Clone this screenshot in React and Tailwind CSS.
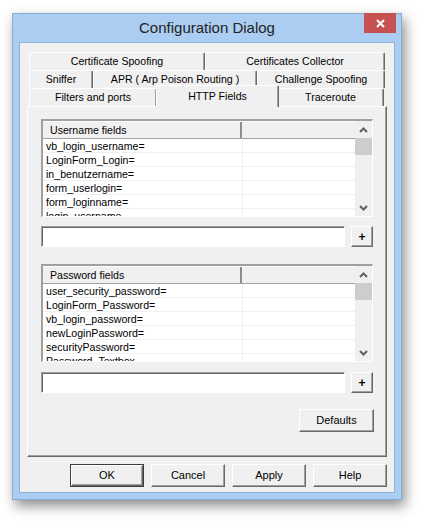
import React from "react";

const userRows = [
  "vb_login_username=",
  "LoginForm_Login=",
  "in_benutzername=",
  "form_userlogin=",
  "form_loginname=",
  "login_username",
];

const passRows = [
  "user_security_password=",
  "LoginForm_Password=",
  "vb_login_password=",
  "newLoginPassword=",
  "securityPassword=",
  "Password_Textbox",
];

const raised =
  "bg-[#f0f0f0] border border-t-white border-l-white border-r-[#696969] border-b-[#696969] shadow-[inset_-1px_-1px_0_#a0a0a0]";

const Chevron = ({ up }) => (
  <svg width="9" height="6" viewBox="0 0 9 6">
    <path
      d={up ? "M1 5 L4.5 1.5 L8 5" : "M1 1 L4.5 4.5 L8 1"}
      fill="none"
      stroke="#606060"
      strokeWidth="2"
    />
  </svg>
);

const Tab = ({ label, w, cls = "" }) => (
  <div
    className={`h-full flex items-center justify-center bg-[#f0f0f0] border-t border-l border-white border-r border-r-[#696969] shadow-[inset_-1px_0_0_#a0a0a0] rounded-t-[2px] ${w} ${cls}`}
  >
    {label}
  </div>
);

const FieldList = ({ title, rows }) => (
  <div className="w-[332px] h-[98px] flex border-t-2 border-l-2 border-t-[#a0a0a0] border-l-[#a0a0a0] border-r border-b border-r-white border-b-white bg-white overflow-hidden">
    <div className="flex-1 flex flex-col overflow-hidden">
      <div className="h-[18px] shrink-0 flex bg-[#f0f0f0] border-b border-[#a0a0a0] border-t border-t-white">
        <div className="w-[199px] pl-[7px] pt-[1px] flex items-center border-r-2 border-[#8c8c8c]">
          {title}
        </div>
        <div className="flex-1" />
      </div>
      {rows.map((r) => (
        <div key={r} className="h-[14px] shrink-0 flex border-b border-[#f0f0f0]">
          <div className="w-[200px] pl-[3px] pt-[2px] flex items-center border-r border-[#f0f0f0] whitespace-nowrap">
            {r}
          </div>
          <div className="flex-1" />
        </div>
      ))}
    </div>
    <div className="w-[17px] bg-[#f0f0f0] flex flex-col">
      <div className="h-[17px] flex items-center justify-center">
        <Chevron up />
      </div>
      <div className="h-[17px] bg-[#cdcdcd]" />
      <div className="flex-1" />
      <div className="h-[17px] flex items-center justify-center">
        <Chevron />
      </div>
    </div>
  </div>
);

const InputRow = () => (
  <div className="flex gap-[6px] h-[21px]">
    <div className="w-[304px] bg-white border border-t-[#a0a0a0] border-l-[#a0a0a0] border-r-white border-b-white shadow-[inset_1px_1px_0_#696969]" />
    <div className={`w-[22px] flex items-center justify-center font-bold text-[12px] ${raised}`}>
      +
    </div>
  </div>
);

export default function App() {
  return (
    <div className="w-[422px] h-[522px] bg-white pt-[13px] pl-[12px] font-['Liberation_Sans',Arial,sans-serif] text-[10.6px] text-black">
      <div className="w-[390px] h-[487px] bg-[#aacdf1] border border-[#86acd6] flex flex-col shadow-[3px_6px_12px_rgba(0,0,0,0.45)]">
        {/* title bar */}
        <div className="h-[28px] relative flex items-center justify-center">
          <span className="text-[15px] text-[#222]">Configuration Dialog</span>
          <div className="absolute right-[5px] -top-[1px] w-[32px] h-[20px] bg-[#c75050] flex items-center justify-center">
            <svg width="9" height="9" viewBox="0 0 9 9">
              <path d="M1 1 L8 8 M8 1 L1 8" stroke="white" strokeWidth="2" />
            </svg>
          </div>
        </div>

        {/* client */}
        <div className="mx-[6px] h-[451px] bg-[#f0f0f0] border border-[#8fb2d8] pl-[7px] pt-[9px]">
          {/* tabs */}
          <div className="ml-[2px] w-[356px] flex flex-col">
            <div className="h-[18px] flex">
              <Tab label="Certificate Spoofing" w="w-[176px]" />
              <Tab label="Certificates Collector" w="w-[180px]" />
            </div>
            <div className="h-[18px] flex">
              <Tab label="Sniffer" w="w-[64px]" />
              <Tab label="APR ( Arp Poison Routing )" w="w-[164px]" />
              <Tab label="Challenge Spoofing" w="w-[128px]" />
            </div>
            <div className="h-[18px] flex items-end">
              <Tab label="Filters and ports" w="w-[128px]" />
              <div className="relative z-10 -ml-[1px] -mb-[1px] w-[123px] h-[22px] flex items-start pt-[3px] justify-center bg-[#f0f0f0] border-t border-l border-white border-r border-r-[#696969] shadow-[inset_-1px_0_0_#a0a0a0] rounded-t-[2px]">
                HTTP Fields
              </div>
              <Tab label="Traceroute" w="w-[107px]" cls="-ml-[2px]" />
            </div>
          </div>

          {/* panel */}
          <div className="w-[360px] h-[351px] border border-t-white border-l-white border-r-[#696969] border-b-[#696969] shadow-[inset_-1px_-1px_0_#a0a0a0] pl-[13px] pt-[12px] flex flex-col">
            <FieldList title="Username fields" rows={userRows} />
            <div className="mt-[9px]">
              <InputRow />
            </div>
            <div className="mt-[17px]">
              <FieldList title="Password fields" rows={passRows} />
            </div>
            <div className="mt-[10px]">
              <InputRow />
            </div>
            <div className="mt-[16px] w-[333px] flex justify-end">
              <div className={`w-[75px] h-[23px] flex items-center justify-center text-[11px] ${raised}`}>
                Defaults
              </div>
            </div>
          </div>

          {/* buttons */}
          <div className="w-[360px] mt-[7px] flex justify-end gap-[7px] text-[11px]">
            <div className="w-[74px] h-[23px] border border-[#3c3c3c] flex">
              <div className={`flex-1 flex items-center justify-center ${raised}`}>OK</div>
            </div>
            <div className={`w-[74px] h-[23px] flex items-center justify-center ${raised}`}>Cancel</div>
            <div className={`w-[74px] h-[23px] flex items-center justify-center ${raised}`}>Apply</div>
            <div className={`w-[74px] h-[23px] flex items-center justify-center ${raised}`}>Help</div>
          </div>
        </div>
      </div>
    </div>
  );
}
